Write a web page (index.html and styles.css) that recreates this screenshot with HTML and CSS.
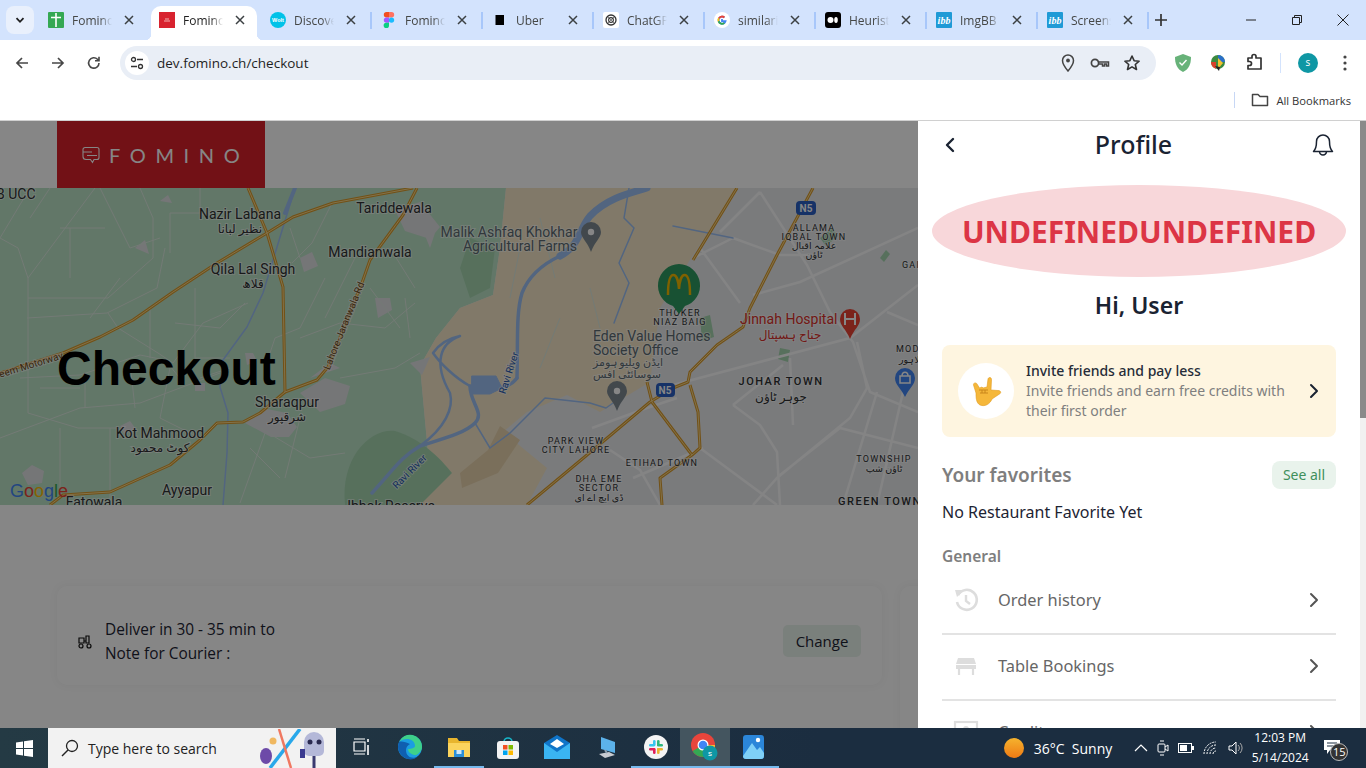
FILE: index.html
```html
<!DOCTYPE html>
<html lang="en">
<head>
  <meta charset="UTF-8">
  <title>Fomino</title>
  <link rel="stylesheet" href="styles.css">
</head>
<body>

  <svg class="defs" width="0" height="0">
    <symbol id="x" viewBox="0 0 10 10"><path d="M1 1l8 8M9 1l-8 8" fill="none" stroke="currentColor" stroke-width="1.5"/></symbol>
    <symbol id="chev" viewBox="0 0 10 16"><path d="M2 2l6 6-6 6" fill="none" stroke="currentColor" stroke-width="2" stroke-linecap="round" stroke-linejoin="round"/></symbol>
    <symbol id="ibb" viewBox="0 0 16 16"><rect width="16" height="16" rx="1" fill="#1f9ad6"/><text x="8" y="12" text-anchor="middle" font-family="Liberation Serif, serif" font-style="italic" font-weight="700" font-size="10" fill="#fff">ibb</text></symbol>
  </svg>

  <!-- Browser chrome -->
  <div class="tabstrip">
    <div class="tab-menu"><svg width="10" height="10" viewBox="0 0 10 10"><path d="M1.5 3.2L5 6.8l3.5-3.6" fill="none" stroke="#1f1f1f" stroke-width="1.8"/></svg></div>
    <div class="tab">
      <svg class="fav" viewBox="0 0 16 16"><rect width="16" height="16" rx="1" fill="#34a853"/><path d="M3 5.500h10M8 1v14" stroke="#fff" stroke-width="1.6"/></svg>
      <span class="tab-title">Fomino</span><svg class="tab-x"><use href="#x"/></svg>
    </div>
    <div class="tab active">
      <svg class="fav" viewBox="0 0 16 16"><rect width="16" height="16" fill="#d8232f"/><path d="M5 9h6M6 7h4" stroke="#f3b0b0" stroke-width="1"/></svg>
      <span class="tab-title">Fomino</span><svg class="tab-x"><use href="#x"/></svg>
    </div>
    <div class="tab sep">
      <svg class="fav" viewBox="0 0 16 16"><circle cx="8" cy="8" r="8" fill="#00c2e8"/><text x="8" y="10" text-anchor="middle" font-family="Liberation Sans, sans-serif" font-weight="700" font-size="5.5" fill="#fff">Wolt</text></svg>
      <span class="tab-title">Discover</span><svg class="tab-x"><use href="#x"/></svg>
    </div>
    <div class="tab sep">
      <svg class="fav" viewBox="0 0 16 16"><path d="M3 0h5v5.400H5.500A2.700 2.700 0 0 1 5.500 0z" fill="#f24e1e"/><path d="M8 0h2.500a2.700 2.700 0 0 1 0 5.400H8z" fill="#ff7262"/><path d="M5.500 5.400H8v5.400H5.500a2.700 2.700 0 0 1 0-5.400z" fill="#a259ff"/><circle cx="10.500" cy="8.100" r="2.700" fill="#1abcfe"/><path d="M5.500 10.800H8v2.500a2.700 2.700 0 1 1-2.500-2.500z" fill="#0acf83"/></svg>
      <span class="tab-title">Fomino</span><svg class="tab-x"><use href="#x"/></svg>
    </div>
    <div class="tab sep">
      <svg class="fav" viewBox="0 0 16 16"><rect x="3.500" y="3" width="8.500" height="10" fill="#000"/></svg>
      <span class="tab-title">Uber</span><svg class="tab-x"><use href="#x"/></svg>
    </div>
    <div class="tab sep">
      <svg class="fav" viewBox="0 0 16 16"><rect width="16" height="16" rx="2" fill="#fff"/><circle cx="8" cy="8" r="5" fill="none" stroke="#333" stroke-width="1.300"/><circle cx="8" cy="8" r="2.400" fill="none" stroke="#333" stroke-width="1.100"/><path d="M4 4l8 8M12 4l-8 8" stroke="#333" stroke-width=".6"/></svg>
      <span class="tab-title">ChatGPT</span><svg class="tab-x"><use href="#x"/></svg>
    </div>
    <div class="tab sep">
      <svg class="fav" viewBox="0 0 16 16"><circle cx="8" cy="8" r="8" fill="#fff"/><path d="M8 6.900v2.300h3.500A3.500 3.500 0 1 1 10.400 5.500" fill="none" stroke="#4285f4" stroke-width="1.800"/><path d="M4.900 6.300A3.500 3.500 0 0 1 10.400 5.500" fill="none" stroke="#ea4335" stroke-width="1.800"/><path d="M4.600 9.400a3.600 3.600 0 0 1 .2-3.100" fill="none" stroke="#fbbc05" stroke-width="1.800"/><path d="M10.300 11a3.600 3.600 0 0 1-5.700-1.600" fill="none" stroke="#34a853" stroke-width="1.800"/></svg>
      <span class="tab-title">similarity</span><svg class="tab-x"><use href="#x"/></svg>
    </div>
    <div class="tab sep">
      <svg class="fav" viewBox="0 0 16 16"><rect width="16" height="16" rx="3" fill="#000"/><circle cx="5.500" cy="8" r="3" fill="#fff"/><ellipse cx="11" cy="8" rx="1.800" ry="3" fill="#fff"/></svg>
      <span class="tab-title">Heurist</span><svg class="tab-x"><use href="#x"/></svg>
    </div>
    <div class="tab sep">
      <svg class="fav"><use href="#ibb"/></svg>
      <span class="tab-title">ImgBB -</span><svg class="tab-x"><use href="#x"/></svg>
    </div>
    <div class="tab sep">
      <svg class="fav"><use href="#ibb"/></svg>
      <span class="tab-title">Screens</span><svg class="tab-x"><use href="#x"/></svg>
    </div>
    <div class="tab-sepline"></div>
    <svg class="new-tab" width="12" height="12" viewBox="0 0 12 12"><path d="M6 0v12M0 6h12" stroke="#333" stroke-width="1.700"/></svg>
    <div class="win-ctl">
      <svg width="12" height="12" viewBox="0 0 12 12"><path d="M1 6h10" stroke="#222" stroke-width="1"/></svg>
      <svg width="12" height="12" viewBox="0 0 12 12"><path d="M1.500 3.500h7v7h-7zM3.500 3.500v-2h7v7h-2" fill="none" stroke="#222" stroke-width="1"/></svg>
      <svg width="12" height="12" viewBox="0 0 12 12"><path d="M.5.500l11 11M11.500.500l-11 11" stroke="#222" stroke-width="1"/></svg>
    </div>
  </div>

  <div class="toolbar">
    <div class="nav-btns">
      <svg width="16" height="16" viewBox="0 0 16 16"><path d="M14 8H3M8 3L3 8l5 5" fill="none" stroke="#474747" stroke-width="1.700"/></svg>
      <svg width="16" height="16" viewBox="0 0 16 16"><path d="M2 8h11M8 3l5 5-5 5" fill="none" stroke="#474747" stroke-width="1.700"/></svg>
      <svg width="16" height="16" viewBox="0 0 16 16"><path d="M13 8a5.200 5.200 0 1 1-1.500-3.700L13 5.800M13 1.800v4h-4" fill="none" stroke="#474747" stroke-width="1.600"/></svg>
    </div>
    <div class="omnibox">
      <div class="site-info"><svg width="14" height="14" viewBox="0 0 14 14"><circle cx="3.500" cy="3.500" r="2" fill="none" stroke="#333" stroke-width="1.300"/><path d="M7 3.500h6M1 10.500h6" stroke="#333" stroke-width="1.500"/><circle cx="10.500" cy="10.500" r="2" fill="none" stroke="#333" stroke-width="1.300"/></svg></div>
      <span class="url">dev.fomino.ch/checkout</span>
      <div class="omni-icons">
        <svg width="14" height="18" viewBox="0 0 14 18"><path d="M7 1a5.500 5.500 0 0 0-5.500 5.500C1.500 10.500 7 17 7 17s5.500-6.500 5.500-10.500A5.500 5.500 0 0 0 7 1z" fill="none" stroke="#444" stroke-width="1.500"/><circle cx="7" cy="6.500" r="1.900" fill="#444"/></svg>
        <svg class="key-icon" width="20" height="12" viewBox="0 0 20 12"><circle cx="5" cy="6" r="3.600" fill="none" stroke="#444" stroke-width="1.700"/><path d="M8.500 5h10v4h-2V7h-2v2h-2V7H8.500" fill="none" stroke="#444" stroke-width="1.500"/></svg>
        <svg width="18" height="18" viewBox="0 0 18 18"><path d="M9 2l2.100 4.700 5 .5-3.800 3.300 1.200 5L9 12.900 4.500 15.500l1.200-5L1.900 7.200l5-.5z" fill="none" stroke="#333" stroke-width="1.600" stroke-linejoin="round"/></svg>
      </div>
    </div>
    <div class="ext-icons">
      <svg width="16" height="18" viewBox="0 0 16 18"><path d="M8 0l8 3c0 7-2 12-8 15C2 15 0 10 0 3z" fill="#67b279"/><path d="M4.500 8.500L7 11l4.500-5" fill="none" stroke="#fff" stroke-width="1.400"/></svg>
      <svg width="18" height="18" viewBox="0 0 18 18"><circle cx="9" cy="8" r="7" fill="#3c8a3f"/><path d="M9 1a7 7 0 0 1 7 7H9z" fill="#2a6fc9"/><path d="M2 8a7 7 0 0 0 5 6.700V8z" fill="#d9402b"/><path d="M9 4l5 5-5 6z" fill="#f2c230"/><path d="M6 12l4 5 1-4z" fill="#222"/></svg>
      <svg width="20" height="20" viewBox="0 0 20 20"><path d="M3 5h4V3.500a2 2 0 0 1 4 0V5h5v11H3v-3.500h1.500a2 2 0 0 0 0-4H3z" fill="none" stroke="#333" stroke-width="1.700" stroke-linejoin="round"/></svg>
      <span class="ext-sep"></span>
      <span class="avatar">s</span>
      <svg width="4" height="16" viewBox="0 0 4 16"><circle cx="2" cy="2" r="1.600" fill="#444"/><circle cx="2" cy="8" r="1.600" fill="#444"/><circle cx="2" cy="14" r="1.600" fill="#444"/></svg>
    </div>
  </div>

  <div class="bookmarks">
    <span class="bm-sep"></span>
    <svg width="18" height="14" viewBox="0 0 18 14"><path d="M1.500 1.500h5.500l2 2h7.500v9h-15z" fill="none" stroke="#444" stroke-width="1.500" stroke-linejoin="round"/></svg>
    <span class="bm-text">All Bookmarks</span>
  </div>

  <!-- Page -->
  <div class="page">
    <div class="main">
      <header class="site-head">
        <div class="logo">
          <svg width="20" height="20" viewBox="0 0 20 20"><path d="M4 2.500h12a2 2 0 0 1 2 2v8a2 2 0 0 1-2 2h-3l-1.500 3-2-3H5a3 3 0 0 1-3-3v-7a2 2 0 0 1 2-2zM2 7h9M6 10.500h10" fill="none" stroke="#fff" stroke-width="1.100"/></svg>
          <span class="logo-text">FOMINO</span>
        </div>
      </header>

      <section class="hero">
        <svg class="map" viewBox="0 0 918 317" width="918" height="317">
          <defs>
            <g id="roads">
              <path d="M0 185L63 165 100 149 133 132 173 104 217 75 267 45 293 29 333 15 413 0"/>
              <path d="M248 0L267 45 283 99 285 204 317 192 328 179 363 92 370 72 403 27 417 0"/>
              <path d="M285 204L260 225 243 234 217 235 200 252 170 277 110 304 63 307 50 317"/>
              <path d="M737 0L693 72M813 0L777 67 750 120 743 139 717 157 690 184 688 194 673 200 650 214 587 267 527 317"/>
              <path d="M647 194L652 214 692 267 700 260 698 224 690 197M692 267L660 290 662 317"/>
            </g>
          </defs>
          <rect width="918" height="317" fill="#e8eaed"/>
          <path class="green" d="M0 0H506L500 60 493 107 460 120 436 150 420 178 428 265 405 317H0z"/>
          <path class="tan" d="M506 0H737L693 67 660 120 650 194 600 224 567 207 527 224 503 244 547 280 527 317H405L428 265 420 178 436 150 460 120 493 107 500 60z"/>
          <path class="tan2" d="M500 238L520 252 498 285 462 300 460 285 488 262z"/>
          <path class="forest" d="M345 317C340 270 370 240 395 243 420 250 440 270 452 285L420 317z"/>
          <path class="forest" d="M470 50l25 10-5 40-20 10-10-30z"/>
          <path class="forest" d="M700 130l10 -3 4 22-12 4zM820 50l12-10 6 8-12 10zM880 70l6-8 4 4-6 8zM780 160l10 2-2 12-10-3z"/>

          <!-- urban patches -->
          <g class="urban">
            <path d="M22 285l10-8 12 6-2 12-14 2zM245 235l22-14 20 4 10 14-8 10-18 0zM300 205l25-15 25 8-5 18-25 8zM310 190l20-15 10 5zM395 22l25-8 20 25-10 12-25-8zM300 70l12-6 6 14-14 6zM375 110l15 0 2 12-14 8zM245 165l8 0 4 8-10 4zM195 195l10 0 0 8-10 0zM420 35l15 10-5 15z"/>
            <path d="M120 238l10-5 6 8-12 5zM160 13l8-6 4 8zM135 60l10-8 4 14zM410 175l20-6 -8 18z"/>
          </g>

          <!-- field tracks -->
          <g class="track">
            <path d="M30 0L0 50M95 0L28 90v80M28 90L18 60 0 50M28 110h80l45-40V30L140 0M100 0L130 60 160 50M165 60l-8 40-50 25-80 5M170 65l0-40 30 0 0-25M108 125l10 15 40 25 15 10 30-40 45-20M195 100v70h35M175 135l45 5 25-25M20 190l60-3 60-20 25 5 18 22M0 250l80-30 60-5 80-30M28 170v55l50 15 40 0M60 240v70M110 240v75M170 180l-10 50 40 20M200 190l30-10M325 90l-25 50-25 10 -10 30M300 150l40-15 45 5 30-25M332 15l-20 40-20 20M355 70l-30 60M370 100l30 40M340 190l55-10 25-15M260 240l50 30 35-5M265 245l-25 70M50 0l-20 30M60 40h45M70 40v50M120 90l-30 40M150 120v50M85 185v35M40 200h40M130 175l5 45M250 260l30 30M300 230l-15 60M300 70l-10-30M390 60l25 40M405 110l5 40M520 60l-10 50M540 30l15 60M560 130l-20 50M590 100l10 40"/>
          </g>

          <!-- city streets -->
          <g class="street">
            <path d="M673 197L850 150 918 97M733 50l47 17h33M753 107l47-13L918 40M760 4l47 73 23 47 23 30 17 50 48 20M857 154l10 46-17 30-73 60-24 27M733 217l27 20 17 27 3 53M783 177l-50 40M790 170l3 67M840 240l-60 47M840 240l78 20M887 124l31 13M877 204l-34 113M903 204l-26 113M760 4l-40 40M733 50l-40 20M700 60l40 55M633 290l70-30M592 240l55-20 30-10M660 317l-20-35-30-20M700 260l77 57"/>
          </g>

          <!-- rivers -->
          <g class="water">
            <path class="thin" d="M295 0L277 59 263 105 247 139 223 172 220 199 228 225 227 265 223 317"/>
            <path d="M295 0L285 25" stroke-width="4"/>
            <path d="M647 0C630 5 607 10 590 28 578 42 580 58 560 68" stroke-width="7"/>
            <path d="M560 68C545 75 530 85 522 105 516 125 518 150 517 190" stroke-width="3.500"/>
            <path d="M517 190C510 200 490 205 470 198 470 215 485 225 475 235 465 245 445 250 420 258 400 270 395 280 372 305" stroke-width="3.500"/>
            <path d="M470 198C455 190 440 175 433 165 440 155 450 150 460 148 440 155 433 175 450 205 454 220 445 240 420 258" stroke-width="2.500"/>
            <path class="lake" d="M472 188h24l6 12-12 6h-18z" stroke-width="1"/>
            <path class="thin" d="M475 235L490 260 510 245 545 210 590 215 606 220 620 210M629 0l-5 30 10 10-15 35 10 20-15 40M733 50l-60-12"/>
          </g>

          <!-- roads -->
          <use href="#roads" class="road-out"/>
          <use href="#roads" class="road-in"/>

          <!-- pins -->
          <g>
            <path class="pin-gray" d="M591 222a10 10 0 0 1 10 10c0 6-6 9-10 20-4-11-10-14-10-20a10 10 0 0 1 10-10z" transform="translate(0,-188)"/>
            <circle cx="591" cy="44" r="3.200" fill="#fff"/>
            <path class="pin-gray" d="M617 381a10 10 0 0 1 10 10c0 6-6 9-10 20-4-11-10-14-10-20a10 10 0 0 1 10-10z" transform="translate(0,-188)"/>
            <circle cx="617" cy="203" r="3.200" fill="#fff"/>
            <path d="M850 309a10 10 0 0 1 10 10c0 7-6 10-10 20-4-10-10-13-10-20a10 10 0 0 1 10-10z" fill="#ea4335" transform="translate(0,-188)"/>
            <path d="M845 125v12M855 125v12M845 131h10" stroke="#fff" stroke-width="2"/>
            <path d="M905 368a10 10 0 0 1 10 10c0 7-6 10-10 19-4-9-10-12-10-19a10 10 0 0 1 10-10z" fill="#4285f4" transform="translate(0,-188)"/>
            <path d="M900 188h10v7h-10zM902 188c0-5 6-5 6 0" fill="none" stroke="#fff" stroke-width="1.500"/>
            <rect x="796" y="13" width="20" height="14" rx="4" fill="#2a5fc4"/>
            <text class="shield" x="806" y="24">N5</text>
            <rect x="656" y="195" width="19" height="14" rx="4" fill="#2a5fc4"/>
            <text class="shield" x="665" y="206">N5</text>
          </g>

          <!-- labels -->
          <g class="label">
            <text x="-4" y="11">B UCC</text>
            <text class="mid" x="240" y="31">Nazir Labana</text>
            <text class="mid ur" x="240" y="45">نظیر لبانا</text>
            <text class="mid" x="394" y="25">Tariddewala</text>
            <text class="mid" x="370" y="69">Mandianwala</text>
            <text class="mid" x="253" y="86">Qila Lal Singh</text>
            <text class="mid ur" x="253" y="100">قلاھ</text>
            <text class="mid" x="287" y="219">Sharaqpur</text>
            <text class="mid ur" x="287" y="233">شرقپور</text>
            <text class="mid" x="160" y="250">Kot Mahmood</text>
            <text class="mid ur" x="160" y="264">کوٹ محمود</text>
            <text class="mid" x="187" y="307">Ayyapur</text>
            <text class="mid" x="94" y="319">Fatowala</text>
            <text class="mid" x="391" y="323">Ibhok Reserve</text>
            <text class="mid road-name" transform="translate(32,180) rotate(-17)">eem Motorway</text>
            <text class="mid road-name" transform="translate(347,139) rotate(-68)">Lahore-Jaranwala Rd</text>
            <text class="mid river" transform="translate(412,286) rotate(-45)">Ravi River</text>
            <text class="mid river" transform="translate(512,186) rotate(-72)">Ravi River</text>
            <text class="mid poi" x="509" y="49">Malik Ashfaq Khokhar</text>
            <text class="mid poi" x="520" y="63">Agricultural Farms</text>
            <text class="poi" x="593" y="153">Eden Value Homes</text>
            <text class="poi" x="593" y="167">Society Office</text>
            <text class="poi ur" x="593" y="178">ایڈن ویلیو ہومز</text>
            <text class="poi ur" x="593" y="190">سوسائٹی افس</text>
            <text class="hosp" x="740" y="136">Jinnah Hospital</text>
            <text class="hosp ur" x="790" y="151" text-anchor="middle">جناح ہسپتال</text>
            <text class="mid caps" x="680" y="128">THOKER</text>
            <text class="mid caps" x="680" y="137">NIAZ BAIG</text>
            <text class="mid caps" x="814" y="43">ALLAMA</text>
            <text class="mid caps" x="814" y="52">IQBAL TOWN</text>
            <text class="mid ur sm" x="814" y="61">علامہ اقبال</text>
            <text class="mid ur sm" x="814" y="70">ٹاؤن</text>
            <text class="caps" x="902" y="80">GAI</text>
            <text class="caps" x="896" y="164">MOD</text>
            <text class="ur sm" x="899" y="175">لاہور</text>
            <text class="mid town" x="781" y="197">JOHAR TOWN</text>
            <text class="mid ur" x="781" y="213">جوہر ٹاؤن</text>
            <text class="mid caps" x="576" y="256">PARK VIEW</text>
            <text class="mid caps" x="576" y="265">CITY LAHORE</text>
            <text class="mid caps" x="662" y="278">ETIHAD TOWN</text>
            <text class="mid caps" x="599" y="294">DHA EME</text>
            <text class="mid caps" x="599" y="303">SECTOR</text>
            <text class="mid ur sm" x="599" y="313">ڈی ایچ اے ای</text>
            <text class="mid caps" x="884" y="274">TOWNSHIP</text>
            <text class="mid ur sm" x="884" y="284">ٹاؤن شپ</text>
            <text class="town" x="838" y="317">GREEN TOWN</text>
          </g>

          <!-- the marker sits over its own label -->
          <path d="M679 76a21.500 21.500 0 0 1 6 42l-6 8-6-8a21.500 21.500 0 0 1 6-42z" fill="#2f9a62"/>
          <path class="mcd" d="M668 107c0-14 2-20 5.500-20 3 0 5 6 5.500 14 .5-8 2.500-14 5.500-14 3.500 0 5.500 6 5.500 20"/>

          <text class="g-logo" x="10" y="309"><tspan fill="#4285f4">G</tspan><tspan fill="#ea4335">o</tspan><tspan fill="#fbbc05">o</tspan><tspan fill="#4285f4">g</tspan><tspan fill="#34a853">l</tspan><tspan fill="#ea4335">e</tspan></text>
        </svg>
        <h1 class="hero-title">Checkout</h1>
      </section>

      <div class="checkout-row">
        <div class="deliver-card">
          <svg class="scooter" width="14" height="14" viewBox="0 0 14 14"><path d="M1 3h5v5H1zM8 1h3v7H8zM6 6h2" fill="none" stroke="#111" stroke-width="1.200"/><circle cx="3" cy="11" r="2" fill="none" stroke="#111" stroke-width="1.200"/><circle cx="11" cy="11" r="2" fill="none" stroke="#111" stroke-width="1.200"/></svg>
          <div class="deliver-text">
            <div>Deliver in 30 - 35 min to</div>
            <div>Note for Courier :</div>
          </div>
          <button class="change-btn" type="button">Change</button>
        </div>
        <div class="side-card"></div>
      </div>
    </div>

    <aside class="drawer">
      <div class="drawer-head">
        <svg class="back" width="10" height="16" viewBox="0 0 10 16"><path d="M8 2L2 8l6 6" fill="none" stroke="#1a2332" stroke-width="2.400" stroke-linecap="round" stroke-linejoin="round"/></svg>
        <span class="drawer-title">Profile</span>
        <svg width="22" height="24" viewBox="0 0 22 24"><path d="M11 2a6.500 6.500 0 0 0-6.500 6.500c0 6-1 8-3 10h19c-2-2-3-4-3-10A6.500 6.500 0 0 0 11 2zM7.500 18.500a3.500 3.500 0 0 0 7 0" fill="none" stroke="#1a2332" stroke-width="1.500" stroke-linejoin="round"/></svg>
      </div>

      <div class="avatar-oval">UNDEFINEDUNDEFINED</div>
      <div class="hi-user">Hi, User</div>

      <div class="invite-card">
        <div class="invite-emoji">
          <svg width="32" height="32" viewBox="0 0 32 32"><path d="M3.500 10C3 8 6 7 7 9l2.500 4 2.500-1 1 1 4-1 1-8c.5-2 3.500-2 3.500.5L21 15l7 .5c3 0 3.500 2.500 1.500 3.500L22 24c-2 5-7 8-12 6-4-2-4-8-4-12z" fill="#f5b73a" stroke="#e09a1f" stroke-width=".6"/><path d="M9 15h9M10 18h8M12 15v3M15 15v3" fill="none" stroke="#c9861a" stroke-width="1"/></svg>
        </div>
        <div class="invite-text">
          <div class="invite-title">Invite friends and pay less</div>
          <div class="invite-sub">Invite friends and earn free credits with their first order</div>
        </div>
        <svg class="row-chev dark" width="10" height="16"><use href="#chev"/></svg>
      </div>

      <div class="fav-head">
        <span class="fav-title">Your favorites</span>
        <span class="see-all">See all</span>
      </div>
      <div class="no-fav">No Restaurant Favorite Yet</div>
      <div class="general">General</div>

      <div class="menu-row">
        <svg class="menu-icon" width="26" height="26" viewBox="0 0 26 26"><path d="M5 8a10 10 0 1 1-1 7" fill="none" stroke="#ddd" stroke-width="2.600"/><path d="M2 3l9 0-7 7z" fill="#ddd"/><path d="M13 8v6l4 3" fill="none" stroke="#ddd" stroke-width="2.400"/></svg>
        <span>Order history</span>
        <svg class="row-chev" width="10" height="16"><use href="#chev"/></svg>
      </div>
      <div class="menu-row">
        <svg class="menu-icon" width="26" height="26" viewBox="0 0 26 26"><path d="M5 5h16l2 6H3z" fill="#ddd"/><rect x="3" y="12" width="20" height="4" fill="#ddd"/><path d="M6 16v6M20 16v6" stroke="#ddd" stroke-width="2.200"/></svg>
        <span>Table Bookings</span>
        <svg class="row-chev" width="10" height="16"><use href="#chev"/></svg>
      </div>
      <div class="menu-row">
        <svg class="menu-icon" width="26" height="26" viewBox="0 0 26 26"><rect x="2" y="3" width="22" height="20" fill="none" stroke="#ddd" stroke-width="2.200"/><circle cx="13" cy="10" r="3" fill="#ddd"/></svg>
        <span>Credits</span>
        <svg class="row-chev" width="10" height="16"><use href="#chev"/></svg>
      </div>
    </aside>

    <div class="scrollbar"><div class="thumb"></div></div>
  </div>

  <!-- Windows taskbar -->
  <footer class="taskbar">
    <div class="start"><svg width="17" height="17" viewBox="0 0 17 17"><path d="M0 2.400l7-1v6.600H0zM8 1.300L17 0v8H8zM0 9h7v6.600l-7-1zM8 9h9v8l-9-1.300z" fill="#fff"/></svg></div>
    <div class="search">
      <svg width="20" height="20" viewBox="0 0 20 20"><circle cx="12" cy="8" r="5.500" fill="none" stroke="#222" stroke-width="1.300"/><path d="M8 12l-6 6" stroke="#222" stroke-width="1.500"/></svg>
      <span class="search-text">Type here to search</span>
      <svg class="search-art" width="76" height="39" viewBox="0 0 76 39"><path d="M40 0L10 39" stroke="#29a8ea" stroke-width="3.500"/><path d="M19 0l12 39" stroke="#f07860" stroke-width="2.500"/><ellipse cx="6" cy="27" rx="6" ry="8" fill="#6d4aa8"/><circle cx="13" cy="12" r="3.500" fill="#f0b860"/><path d="M44 13a10 10 0 0 1 20 0v9a5 5 0 0 1-5 5H49a5 5 0 0 1-5-5z" fill="#b4b8d8"/><circle cx="50" cy="13" r="2.500" fill="#2a2a50"/><circle cx="59" cy="13" r="2.500" fill="#2a2a50"/><path d="M54 27v12" stroke="#3a3a70" stroke-width="3"/><rect x="40" y="20" width="5" height="9" fill="#3a3a90"/></svg>
    </div>
    <div class="task-icons">
      <div class="task-item"><svg width="20" height="18" viewBox="0 0 20 18"><path d="M3 4h11v9H3zM3 1h11M3 16h11" fill="none" stroke="#fff" stroke-width="1.200"/><path d="M17 1v3M17 7v10" stroke="#fff" stroke-width="1.600"/></svg></div>
      <div class="task-item"><svg width="26" height="26" viewBox="0 0 26 26"><circle cx="13" cy="13" r="12" fill="#1b9de2"/><path d="M25 13a12 12 0 0 0-23-5c5-5 16-4 16 4 0 2-4 3-7 3 0 4 5 6 8 6 3-1 6-5 6-8z" fill="#3ed08a"/><path d="M2 8c-3 7 1 15 9 17 3 1 7 0 9-2-5 2-11 0-11-7 0-3 2-5 4-6-4-2-9-3-11-2z" fill="#0f5fb0"/></svg></div>
      <div class="task-item open"><svg width="24" height="22" viewBox="0 0 24 22"><path d="M1 2h9l2 3h11v16H1z" fill="#e8b52e"/><rect x="1" y="7" width="22" height="14" fill="#fbd45d"/><rect x="7" y="14" width="10" height="7" fill="#2a8fd8"/><rect x="9.500" y="14" width="5" height="4" fill="#cfe8f8"/></svg></div>
      <div class="task-item"><svg width="22" height="24" viewBox="0 0 22 24"><path d="M7 7a4 4 0 0 1 8 0" fill="none" stroke="#18b6c9" stroke-width="1.600"/><rect x="0" y="6" width="22" height="18" rx="3" fill="#f3f3f3"/><rect x="6" y="10" width="4.500" height="4.500" fill="#f25022"/><rect x="11.500" y="10" width="4.500" height="4.500" fill="#7fba00"/><rect x="6" y="15.500" width="4.500" height="4.500" fill="#00a4ef"/><rect x="11.500" y="15.500" width="4.500" height="4.500" fill="#ffb900"/></svg></div>
      <div class="task-item"><svg width="26" height="24" viewBox="0 0 26 24"><path d="M13 0L0 8v16h26V8z" fill="#0f74c8"/><path d="M0 8l13 9 13-9v16H0z" fill="#3ab4f2"/><path d="M6 9l7 4 7-4-7-5z" fill="#fff"/></svg></div>
      <div class="task-item"><svg width="24" height="26" viewBox="0 0 24 26"><path d="M6 3l14 5v11L6 15z" fill="#5cb2ea"/><path d="M4 20l10-2 6 3-10 3z" fill="#c9ccd2"/><path d="M10 16l2 3" stroke="#8da0b0" stroke-width="2"/></svg></div>
      <div class="task-item open"><svg width="24" height="24" viewBox="0 0 24 24"><circle cx="12" cy="12" r="12" fill="#f4f4f4"/><rect x="9" y="5" width="2.600" height="6" rx="1.300" fill="#36c5f0"/><rect x="5" y="9" width="6" height="2.600" rx="1.300" fill="#36c5f0"/><rect x="13" y="5" width="2.600" height="6" rx="1.300" fill="#2eb67d"/><rect x="13" y="9" width="6" height="2.600" rx="1.300" fill="#2eb67d"/><rect x="13" y="13" width="2.600" height="6" rx="1.300" fill="#ecb22e"/><rect x="13" y="13" width="6" height="2.600" rx="1.300" fill="#ecb22e"/><rect x="9" y="13" width="2.600" height="6" rx="1.300" fill="#e01e5a"/><rect x="5" y="13" width="6" height="2.600" rx="1.300" fill="#e01e5a"/></svg></div>
      <div class="task-item chrome-item open">
        <svg width="28" height="30" viewBox="0 0 28 30"><circle cx="12" cy="13" r="12" fill="#e8453c"/><path d="M12 13L1.600 19A12 12 0 0 0 18 23.400z" fill="#34a853"/><path d="M12 13h12a12 12 0 0 1-6 10.400z" fill="#fbc02d"/><circle cx="12" cy="13" r="5.500" fill="#fff"/><circle cx="12" cy="13" r="4.300" fill="#4285f4"/><circle cx="19" cy="21" r="7.500" fill="#0f97a4"/><text x="19" y="24" text-anchor="middle" font-family="Liberation Sans, sans-serif" font-size="8" fill="#fff">s</text></svg>
      </div>
      <div class="task-item open"><svg width="24" height="26" viewBox="0 0 24 26"><rect x="1" y="1" width="21" height="24" rx="3" fill="#2b86d9"/><path d="M1 22l9-13 5 7 3-3 4 6v3a3 3 0 0 1-3 3H4a3 3 0 0 1-3-3z" fill="#7fd0f7"/><circle cx="16" cy="6" r="2.200" fill="#fff"/></svg></div>
    </div>
    <div class="tray">
      <span class="sun"></span>
      <span class="weather">36°C&nbsp; Sunny</span>
      <div class="tray-icons">
        <svg width="14" height="8" viewBox="0 0 14 8"><path d="M1 7l6-6 6 6" fill="none" stroke="#fff" stroke-width="1.200"/></svg>
        <svg width="12" height="18" viewBox="0 0 12 18"><rect x="1" y="5" width="7" height="8" rx="1" fill="none" stroke="#fff"/><path d="M8 8l3-2v6l-3-2M3 2h4M3 16h4" fill="none" stroke="#fff"/></svg>
        <svg width="16" height="10" viewBox="0 0 16 10"><rect x=".5" y=".5" width="13" height="9" fill="none" stroke="#fff"/><rect x="2" y="2" width="7" height="6" fill="#fff"/><rect x="14" y="3" width="2" height="4" fill="#fff"/></svg>
        <svg width="16" height="14" viewBox="0 0 16 14"><path d="M1 13a12 12 0 0 1 12-12M4 13a9 9 0 0 1 9-9M7 13a6 6 0 0 1 6-6M10 13a3 3 0 0 1 3-3" fill="none" stroke="#fff" stroke-dasharray="2 1"/></svg>
        <svg width="16" height="14" viewBox="0 0 16 14"><path d="M1 5h3l4-4v12L4 9H1z" fill="none" stroke="#fff"/><path d="M10 4a4 4 0 0 1 0 6M12 2a7 7 0 0 1 0 10" fill="none" stroke="#aaa"/></svg>
      </div>
      <div class="clock"><div>12:03 PM</div><div>5/14/2024</div></div>
      <div class="notif">
        <svg width="16" height="14" viewBox="0 0 16 14"><path d="M0 0h16v10H6l-3 4v-4H0z" fill="#fff"/><path d="M3 3h10M3 6h10" stroke="#1b2d40"/></svg>
        <span class="notif-badge">15</span>
      </div>
    </div>
  </footer>

</body>
</html>
```

FILE: styles.css
```css
* {
  box-sizing: border-box;
}

html, body {
  margin: 0;
  height: 768px;
  overflow: hidden;
}

body {
  display: flex;
  flex-direction: column;
  font-family: "Open Sans", "Noto Sans", sans-serif;
  background-color: #fff;
}

.defs {
  position: absolute;
}

/* Browser chrome */
.tabstrip {
  height: 40px;
  flex-shrink: 0;
  display: flex;
  align-items: flex-end;
  padding-left: 6px;
  background-color: #d3e3fd;
}

.tab-menu {
  width: 28px;
  height: 28px;
  margin: 0 6px 6px 0;
  display: flex;
  align-items: center;
  justify-content: center;
  border-radius: 8px;
  background-color: #e9f0fc;
}

.tab {
  position: relative;
  width: 106px;
  height: 34px;
  margin-right: 5px;
  padding: 0 0 6px 8px;
  display: flex;
  align-items: center;
  border-radius: 10px 10px 0 0;
  font-size: 12px;
  color: #454746;
}

.tab.active {
  background-color: #fff;
  color: #1f1f1f;
}

.tab.active::before,
.tab.active::after {
  content: "";
  position: absolute;
  bottom: 0;
  width: 6px;
  height: 6px;
}

.tab.active::before {
  left: -6px;
  background: radial-gradient(circle at 0 0, transparent 6px, #fff 6.5px);
}

.tab.active::after {
  right: -6px;
  background: radial-gradient(circle at 100% 0, transparent 6px, #fff 6.5px);
}

.tab.sep::before {
  content: "";
  position: absolute;
  left: -3px;
  top: 6px;
  height: 17px;
  width: 2px;
  background-color: #a8c7fa;
}

.tab.active + .tab.sep::before {
  display: none;
}

.tab-sepline {
  width: 2px;
  height: 17px;
  margin: 0 0 11px -3px;
  background-color: #a8c7fa;
}

.fav {
  width: 16px;
  height: 16px;
  flex-shrink: 0;
}

.tab-title {
  width: 40px;
  margin-left: 8px;
  overflow: hidden;
  white-space: nowrap;
  -webkit-mask-image: linear-gradient(to right, #000 70%, transparent);
  mask-image: linear-gradient(to right, #000 70%, transparent);
}

.tab-x {
  width: 10px;
  height: 10px;
  margin-left: 12px;
  color: #3c4043;
}

.new-tab {
  margin: 0 0 14px 6px;
}

.win-ctl {
  margin-left: auto;
  height: 40px;
  padding-right: 17px;
  display: flex;
  align-items: center;
  gap: 34px;
  align-self: flex-start;
  flex-shrink: 0;
}

.toolbar {
  height: 40px;
  flex-shrink: 0;
  display: flex;
  align-items: flex-end;
  border-radius: 10px 10px 0 0;
  background-color: #fff;
}

.nav-btns {
  width: 120px;
  height: 34px;
  padding-left: 14px;
  display: flex;
  align-items: center;
  gap: 20px;
}

.omnibox {
  width: 1036px;
  height: 34px;
  padding: 0 15px 0 5px;
  display: flex;
  align-items: center;
  border-radius: 17px;
  background-color: #e9eef6;
}

.site-info {
  width: 24px;
  height: 24px;
  display: flex;
  align-items: center;
  justify-content: center;
  border-radius: 50%;
  background-color: #fff;
}

.url {
  margin-left: 8px;
  font-size: 13.5px;
  color: #1f1f1f;
}

.omni-icons {
  margin-left: auto;
  display: flex;
  align-items: center;
  gap: 13px;
}

.key-icon {
  margin-left: 2px;
}

.ext-icons {
  height: 34px;
  display: flex;
  align-items: center;
  padding-left: 19px;
  flex: 1;
}

.ext-icons svg:nth-child(2) {
  margin-left: 18px;
}

.ext-icons svg:nth-child(3) {
  margin-left: 18px;
}

.ext-sep {
  width: 1px;
  height: 20px;
  margin: 0 17px 0 15px;
  background-color: #d3e3fd;
}

.avatar {
  width: 20px;
  height: 20px;
  line-height: 18px;
  text-align: center;
  border-radius: 50%;
  background-color: #0f97a4;
  color: #fff;
  font-size: 10px;
}

.ext-icons svg:last-child {
  margin-left: 25px;
}

.bookmarks {
  height: 41px;
  flex-shrink: 0;
  display: flex;
  align-items: center;
  justify-content: flex-end;
  padding-right: 15px;
  border-bottom: 1px solid #d0d0d0;
  background-color: #fff;
}

.bm-sep {
  width: 1px;
  height: 16px;
  margin-right: 16px;
  background-color: #c7d7f5;
}

.bm-text {
  margin-left: 7px;
  font-size: 11.2px;
  color: #333;
}

/* Page */
.page {
  flex: 1;
  min-height: 0;
  display: flex;
  overflow: hidden;
}

.main {
  position: relative;
  width: 918px;
  flex-shrink: 0;
  overflow: hidden;
  background-color: #fff;
}

.main::after {
  content: "";
  position: absolute;
  inset: 0;
  background-color: rgba(0, 0, 0, 0.475);
}

.site-head {
  height: 67px;
  padding-left: 57px;
}

.logo {
  width: 208px;
  height: 67px;
  padding-left: 24px;
  display: flex;
  align-items: center;
  background-color: #d9212b;
}

.logo-text {
  margin-left: 8px;
  font-family: Lato, sans-serif;
  font-size: 20px;
  letter-spacing: 9.6px;
  color: #fff;
}

.hero {
  position: relative;
  height: 317px;
  padding: 151px 0 0 57px;
  overflow: hidden;
}

.map {
  position: absolute;
  left: 0;
  top: 0;
}

.hero-title {
  position: relative;
  margin: 0;
  font-family: "Liberation Sans", Arial, sans-serif;
  font-size: 48px;
  line-height: 60px;
  font-weight: 700;
  color: #000;
}

.green { fill: #bbe2c6; }
.tan { fill: #f5e7c8; }
.tan2 { fill: #e9d3ae; }
.forest { fill: #a5d6b0; }
.urban path { fill: #dfe0e3; }
.track path { fill: none; stroke: #dbe9df; stroke-width: 1; }
.street path { fill: none; stroke: #fbfbfc; stroke-width: 2.500; }
.water path { fill: none; stroke: #9cc0f4; stroke-linejoin: round; stroke-linecap: round; }
.water .thin { stroke-width: 1.500; }
.water .lake { fill: #9cc0f4; }
#roads path { fill: none; stroke-linejoin: round; }
.road-out { stroke: #d99a2b; stroke-width: 3; }
.road-in { stroke: #f7d98e; stroke-width: 1; }
.pin-gray { fill: #7e8a92; }
.mcd { fill: none; stroke: #f2b900; stroke-width: 2.500; }
.shield { font: 700 10px Roboto, sans-serif; fill: #fff; text-anchor: middle; }

.label text {
  font-family: Roboto, "DejaVu Sans", sans-serif;
  font-size: 14px;
  fill: #2f3133;
  stroke: #fff;
  stroke-width: 2px;
  stroke-opacity: 0.55;
  paint-order: stroke;
}

.label .mid { text-anchor: middle; }
.label .ur { font-size: 12px; }
.label .sm { font-size: 9.500px; }
.label .caps { font-size: 9px; letter-spacing: 1.200px; }
.label .town { font-size: 11px; font-weight: 500; letter-spacing: 1.500px; }
.label .poi { font-size: 14px; fill: #5d6b72; }
.label .poi.ur { font-size: 11px; }
.label .road-name { font-size: 10px; fill: #6b4a1c; }
.label .river { font-size: 10px; fill: #2b5cb0; }
.label .hosp { font-size: 14px; fill: #d9302a; }
.label .hosp.ur { font-size: 12px; }

.g-logo {
  font-family: "Liberation Sans", Arial, sans-serif;
  font-size: 18px;
}

.checkout-row {
  display: flex;
  gap: 18px;
  padding: 81px 0 0 57px;
}

.deliver-card {
  width: 825px;
  height: 99px;
  padding: 12px 21px 0;
  display: flex;
  align-items: center;
  flex-shrink: 0;
  border-radius: 10px;
  background-color: #fff;
  box-shadow: 0 0 10px rgba(0, 0, 0, 0.05);
}

.scooter {
  flex-shrink: 0;
}

.deliver-text {
  margin-left: 13px;
  font-size: 15.4px;
  line-height: 24px;
  color: #1d2433;
}

.change-btn {
  margin: -2px 0 0 auto;
  width: 78px;
  height: 32px;
  border: none;
  border-radius: 5px;
  background-color: #e9f3ec;
  font-family: inherit;
  font-size: 15px;
  color: #1d2433;
}

.side-card {
  width: 100px;
  height: 180px;
  flex-shrink: 0;
  border-radius: 10px;
  background-color: #fff;
  box-shadow: 0 0 10px rgba(0, 0, 0, 0.05);
}

/* Profile drawer */
.drawer {
  width: 442px;
  flex-shrink: 0;
  padding: 0 24px;
  overflow: hidden;
  font-family: "Noto Sans", sans-serif;
  background-color: #fff;
}

.drawer-head {
  height: 48px;
  display: flex;
  align-items: center;
  justify-content: space-between;
  padding: 0 2px 0 3px;
}

.drawer-title {
  margin-top: -2px;
  font-size: 25px;
  font-weight: 500;
  color: #1a2332;
}

.avatar-oval {
  height: 92px;
  margin: 16px -10px 0;
  display: flex;
  align-items: center;
  justify-content: center;
  border-radius: 50%;
  background-color: #f8d7da;
  color: #dc3545;
  font-size: 30px;
  font-weight: 700;
}

.hi-user {
  margin-top: 10px;
  text-align: center;
  font-size: 23px;
  line-height: 36px;
  font-weight: 600;
  color: #1a2332;
}

.invite-card {
  height: 92px;
  margin-top: 22px;
  padding: 0 17px 0 16px;
  display: flex;
  align-items: center;
  border-radius: 8px;
  background-color: #fef5e0;
}

.invite-emoji {
  width: 56px;
  height: 56px;
  display: flex;
  align-items: center;
  justify-content: center;
  flex-shrink: 0;
  border-radius: 50%;
  background-color: #fff;
}

.invite-text {
  width: 272px;
  margin-left: 12px;
  font-size: 14px;
  line-height: 20px;
}

.invite-title {
  font-weight: 500;
  color: #262c38;
}

.invite-sub {
  color: #7f7f7f;
}

.row-chev {
  margin-left: auto;
  color: #555;
  flex-shrink: 0;
}

.row-chev.dark {
  color: #1a2332;
}

.fav-head {
  height: 28px;
  margin-top: 24px;
  display: flex;
  align-items: center;
  justify-content: space-between;
}

.fav-title {
  font-size: 19px;
  font-weight: 600;
  color: #7e7e7e;
}

.see-all {
  width: 64px;
  height: 28px;
  line-height: 27px;
  text-align: center;
  border-radius: 8px;
  background-color: #e9f3ec;
  color: #3f8f5b;
  font-size: 14px;
}

.no-fav {
  margin-top: 11px;
  font-size: 16px;
  line-height: 24px;
  color: #1d2433;
}

.general {
  margin-top: 20px;
  margin-bottom: 1px;
  font-size: 15.500px;
  line-height: 24px;
  font-weight: 600;
  color: #7e7e7e;
}

.menu-row {
  height: 66px;
  padding: 0 17px 3px 11px;
  display: flex;
  align-items: center;
  border-bottom: 2px solid #e3e3e3;
  font-size: 16.400px;
  color: #666;
}

.menu-icon {
  margin-right: 19px;
  flex-shrink: 0;
}

.scrollbar {
  flex: 1;
  background-color: #f1f1f1;
}

.thumb {
  height: 297px;
  background-color: #8a8a8a;
}

/* Windows taskbar */
.taskbar {
  height: 40px;
  flex-shrink: 0;
  display: flex;
  align-items: stretch;
  background: linear-gradient(to right, #243a44, #1b2d40 60%);
  color: #fff;
}

.start {
  width: 48px;
  flex-shrink: 0;
  display: flex;
  align-items: center;
  justify-content: center;
}

.search {
  width: 288px;
  flex-shrink: 0;
  padding-left: 12px;
  display: flex;
  align-items: center;
  overflow: hidden;
  background-color: #f2f2f2;
}

.search-text {
  margin-left: 8px;
  font-size: 14px;
  color: #222;
}

.search-art {
  margin-left: auto;
  flex-shrink: 0;
}

.task-icons {
  display: flex;
  flex-shrink: 0;
}

.task-item {
  width: 49.200px;
  display: flex;
  align-items: center;
  justify-content: center;
  border-bottom: 2px solid transparent;
}

.task-item.open {
  border-bottom-color: #76b9ed;
}

.chrome-item {
  background-color: #44555f;
}

.tray {
  flex: 1;
  min-width: 0;
  display: flex;
  align-items: center;
  padding-left: 225px;
}

.sun {
  width: 20px;
  height: 20px;
  flex-shrink: 0;
  border-radius: 50%;
  background: linear-gradient(#f5b32e, #ef7a14);
}

.weather {
  margin-left: 10px;
  font-size: 14px;
  white-space: nowrap;
}

.tray-icons {
  display: flex;
  align-items: center;
  gap: 9px;
  margin-left: 22px;
}

.clock {
  flex-shrink: 0;
  width: 74px;
  margin-left: -1px;
  text-align: center;
  font-size: 12px;
  line-height: 20px;
}

.notif {
  position: relative;
  margin-left: 7px;
}

.notif-badge {
  position: absolute;
  left: 6px;
  top: 6px;
  width: 18px;
  height: 18px;
  line-height: 15px;
  text-align: center;
  border: 1px solid #bbb;
  border-radius: 50%;
  background-color: #333;
  font-size: 11px;
}
```
